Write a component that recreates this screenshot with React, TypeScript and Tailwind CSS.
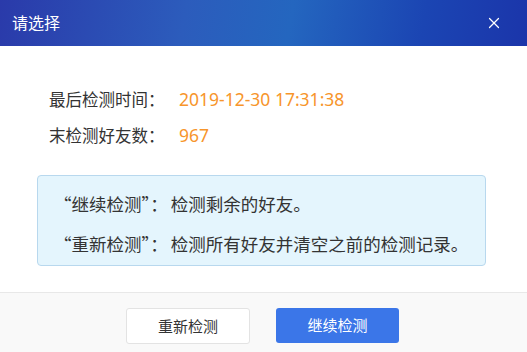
import { X } from "lucide-react";

const font = { fontFamily: '"Microsoft YaHei", "Noto Sans", "Noto Sans CJK SC", sans-serif' };
const cjk = { fontFamily: '"Noto Sans CJK SC", sans-serif' };

export default function App() {
  return (
    <div className="flex h-[352px] w-[527px] flex-col bg-white text-[#333]" style={font}>
      <div className="flex h-[46px] shrink-0 items-center justify-between bg-[linear-gradient(100deg,#2a3aaa_0%,#2c5cbc_35%,#2466bf_55%,#1b45b3_80%,#1b35aa_100%)] pl-3 pr-[24px]">
        <div className="text-[16px] text-white">请选择</div>
        <X className="h-[18px] w-[18px] text-white" strokeWidth={1.6} />
      </div>
      <div className="flex flex-1 flex-col pl-[37px] pr-[41px] pt-[43px]">
        <div className="flex flex-col gap-[15px] pl-3 text-[16.5px] leading-[21px]">
          <div className="flex items-baseline">
            <span className="w-[130px]">最后检测时间：</span>
            <span className="text-[17.5px] text-[#f7952b]">2019-12-30 17:31:38</span>
          </div>
          <div className="flex items-baseline">
            <span className="w-[130px]">末检测好友数：</span>
            <span className="text-[17.5px] text-[#f7952b]">967</span>
          </div>
        </div>
        <div
          className="mt-[29px] flex h-[91px] flex-col gap-[19px] rounded-[4px] border border-[#b8d8ee] bg-[#e4f5fd] pl-[16px] pt-[17px] text-[17.5px] leading-[21px]"
          style={cjk}
        >
          <div>“继续检测”：<span className="ml-[3px]">检测剩余的好友。</span></div>
          <div>“重新检测”：<span className="ml-[3px]">检测所有好友并清空之前的检测记录。</span></div>
        </div>
      </div>
      <div className="flex h-[60px] shrink-0 items-start justify-center gap-[26px] border-t border-[#e8e8e8] bg-[#f9f9f9] pr-[2px] pt-[15px]">
        <button className="h-[36px] w-[124px] rounded-[3px] border border-[#e3e3e3] bg-white text-[15px] text-[#333]">
          重新检测
        </button>
        <button className="h-[35px] w-[123px] rounded-[3px] bg-[#3b76e8] text-[15px] text-white">
          继续检测
        </button>
      </div>
    </div>
  );
}
